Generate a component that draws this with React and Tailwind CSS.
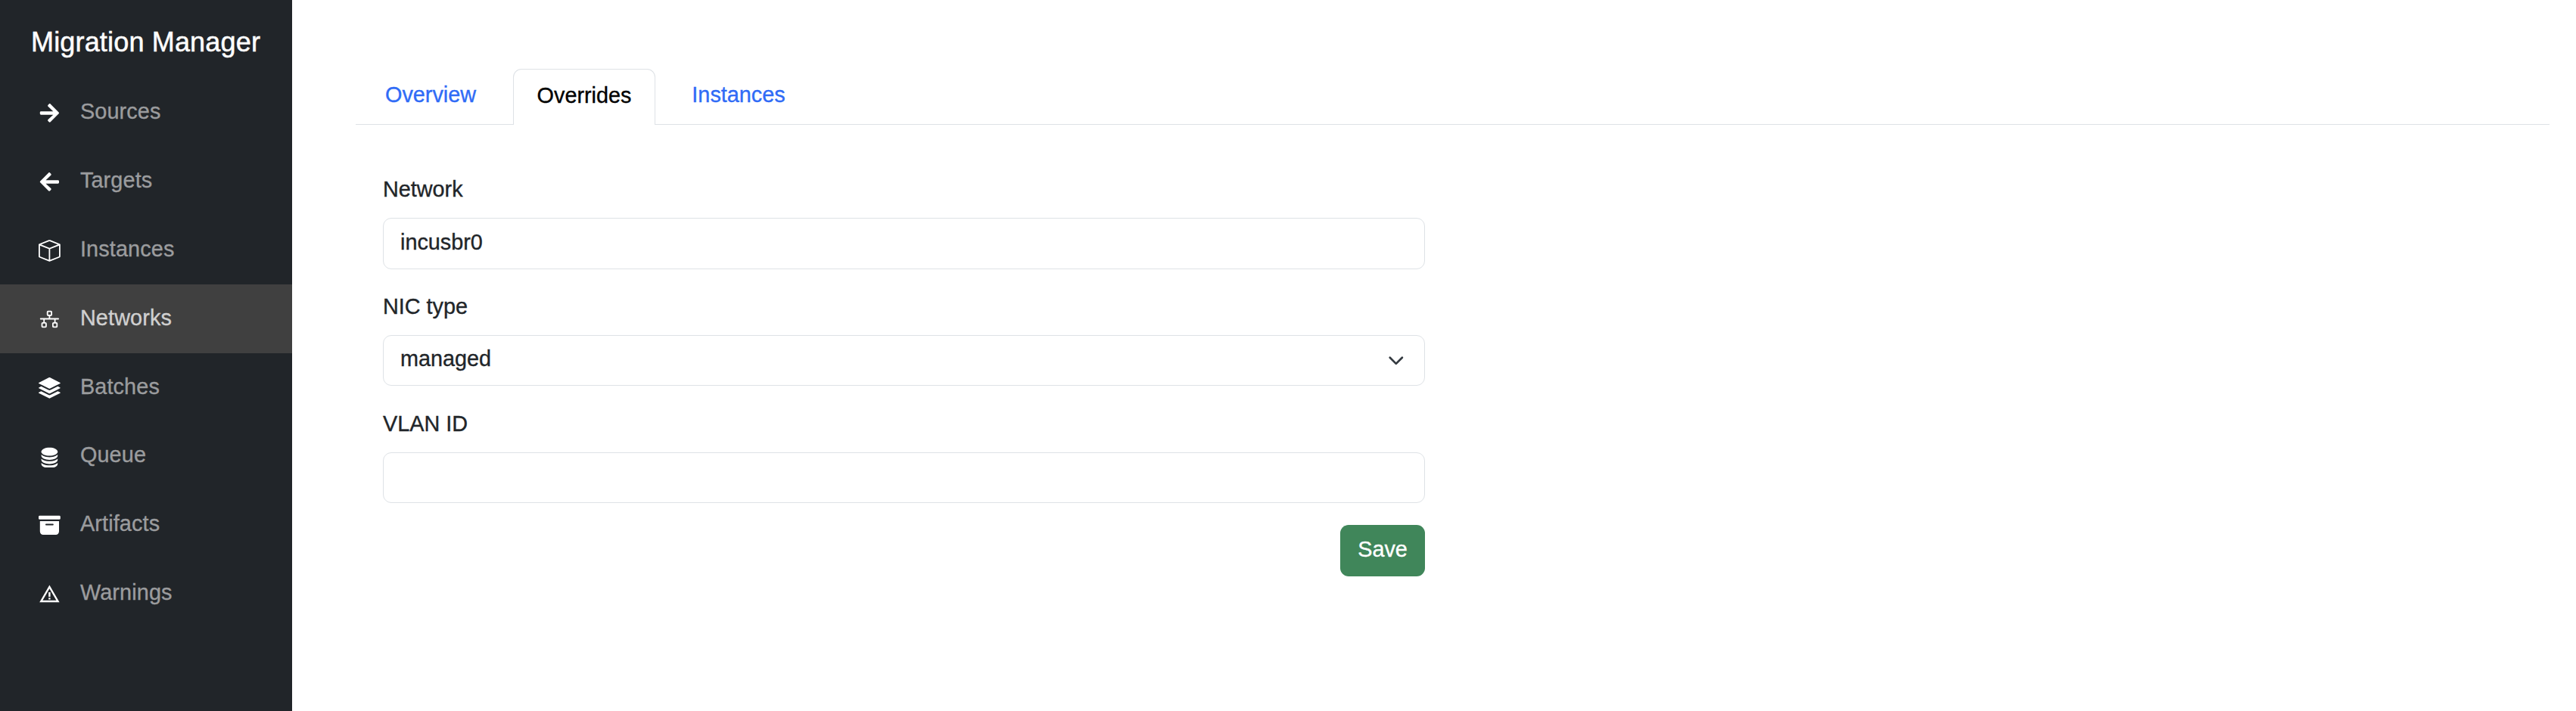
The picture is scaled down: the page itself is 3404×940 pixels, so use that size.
import { FaArrowLeft, FaArrowRight } from "react-icons/fa";
import { BsArchiveFill, BsBox, BsDatabaseFill, BsStack } from "react-icons/bs";
import { PiNetwork } from "react-icons/pi";
import { MdWarningAmber } from "react-icons/md";

const navItems = [
  { label: "Sources", Icon: FaArrowRight },
  { label: "Targets", Icon: FaArrowLeft },
  { label: "Instances", Icon: BsBox },
  { label: "Networks", Icon: PiNetwork, active: true },
  { label: "Batches", Icon: BsStack },
  { label: "Queue", Icon: BsDatabaseFill },
  { label: "Artifacts", Icon: BsArchiveFill },
  { label: "Warnings", Icon: MdWarningAmber },
];

function Sidebar() {
  return (
    <aside className="w-[386px] shrink-0 bg-[#212529]">
      <div className="h-[103.3px] pt-[35px] pl-[41px] text-[36px] leading-[42px] tracking-[0.17px] whitespace-nowrap text-white [-webkit-text-stroke:0.5px]">
        Migration Manager
      </div>
      <nav>
        {navItems.map(({ label, Icon, active }) => (
          <a
            key={label}
            className={`flex h-[90.9px] items-start pl-[51.1px] ${active ? "bg-[#404040] text-[#d0d0d0]" : "text-[#9b9c9e]"}`}
          >
            <Icon className="mt-[31.8px] size-[28.8px] shrink-0 text-white" />
            <span className="mt-[22.7px] ml-[26px] leading-[43px] tracking-[0.15px]">{label}</span>
          </a>
        ))}
      </nav>
    </aside>
  );
}

function Tabs() {
  return (
    <div className="flex h-[74px] items-stretch border-b border-[#dee2e6] text-[#2f6bf6]">
      <button className="w-[208px] pr-[10px] pb-[3px]">Overview</button>
      <button className="-mb-px w-[188px] rounded-t-[11px] border border-b-0 border-[#dee2e6] bg-white pb-[4px] text-black">
        Overrides
      </button>
      <button className="w-[220px] pb-[3px]">Instances</button>
    </div>
  );
}

function Field({ label, children }) {
  return (
    <div className="h-[155px]">
      <label className="block h-[53px] leading-[50px]">{label}</label>
      {children}
    </div>
  );
}

export default function App() {
  return (
    <div className="flex h-[940px] bg-white font-['Liberation_Sans',Arial,sans-serif] text-[28.8px] text-[#212529] [-webkit-text-stroke:0.35px]">
      <Sidebar />
      <main className="flex-1 pt-[91px] pr-[35px] pl-[84px]">
        <Tabs />
        <form className="mt-[60px] ml-[36px] w-[1377px]">
          <Field label="Network">
            <input
              className="mt-[10px] block h-[68px] w-full rounded-[11px] border border-[#dee2e6] pr-[22px] pb-[3px] pl-[22px]"
              defaultValue="incusbr0"
            />
          </Field>
          <Field label="NIC type">
            <div className="mt-[10px] flex h-[67px] items-center justify-between rounded-[11px] border border-[#dee2e6] pr-[26px] pl-[22px]">
              <span className="pb-[3px]">managed</span>
              <svg viewBox="0 0 16 16" className="size-[21.6px]" fill="none">
                <path d="m2 5 6 6 6-6" stroke="#343a40" strokeWidth="2" strokeLinecap="round" strokeLinejoin="round" />
              </svg>
            </div>
          </Field>
          <Field label="VLAN ID">
            <input className="mt-[10px] block h-[67px] w-full rounded-[11px] border border-[#dee2e6] px-[22px]" />
          </Field>
          <div className="mt-[4px] flex justify-end">
            <button type="button" className="h-[68px] w-[112px] rounded-[11px] bg-[#40865a] pb-[3px] text-white">
              Save
            </button>
          </div>
        </form>
      </main>
    </div>
  );
}
